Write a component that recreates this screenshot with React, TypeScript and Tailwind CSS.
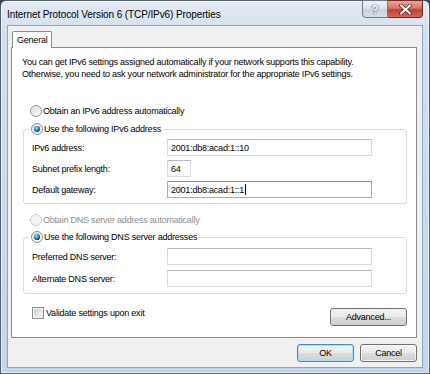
import React from 'react';

function Radio({ checked = false, disabled = false }: { checked?: boolean; disabled?: boolean }) {
  return (
    <svg width="12" height="12" viewBox="0 0 12 12" className="shrink-0">
      <defs>
        <linearGradient id="radioFill" x1="0" y1="0" x2="1" y2="1">
          <stop offset="0" stopColor="#d2d2d2" />
          <stop offset="1" stopColor="#ffffff" />
        </linearGradient>
        <radialGradient id="radioDot" cx="0.4" cy="0.35" r="0.75">
          <stop offset="0" stopColor="#a6e8fc" />
          <stop offset="0.45" stopColor="#2b8fc4" />
          <stop offset="1" stopColor="#0c3552" />
        </radialGradient>
      </defs>
      <circle cx="6" cy="6" r="5.5" fill={disabled ? '#f5f5f5' : 'url(#radioFill)'} stroke={disabled ? '#c9c9c9' : '#8e8f8f'} />
      {!disabled && <circle cx="6" cy="6" r="4.3" fill="none" stroke="#f4f4f4" strokeWidth="0.8" />}
      {checked && <circle cx="6" cy="6" r="3.1" fill="url(#radioDot)" />}
    </svg>
  );
}

function Checkbox() {
  return (
    <svg width="12" height="12" viewBox="0 0 12 12" className="shrink-0">
      <defs>
        <linearGradient id="boxFill" x1="0" y1="0" x2="1" y2="1">
          <stop offset="0" stopColor="#cfcfcf" />
          <stop offset="1" stopColor="#f7f7f7" />
        </linearGradient>
      </defs>
      <rect x="0.5" y="0.5" width="11" height="11" fill="#f4f4f4" stroke="#8e8f8f" />
      <rect x="2" y="2" width="8" height="8" fill="url(#boxFill)" />
    </svg>
  );
}

function Field({ label, value, w = 'w-[205px]', focused = false }: { label: string; value?: string; w?: string; focused?: boolean }) {
  return (
    <div className="flex items-center h-[17px]">
      <span className="w-[135px] shrink-0">{label}</span>
      <div
        className={`${w} h-[17px] flex items-center px-[3px] bg-white border ${
          focused ? 'border-[#7eb4ea] border-t-[#569de5]' : 'border-[#d6dadf] border-t-[#b5b9bf]'
        }`}
      >
        {value}
        {focused && <span className="ml-px w-px h-[11px] bg-black" />}
      </div>
    </div>
  );
}

const btn =
  'h-[18px] rounded-[3px] border flex items-center justify-center bg-[linear-gradient(180deg,#f3f3f3_0%,#ebebeb_48%,#dcdcdc_52%,#cfcfcf_100%)]';

export default function App() {
  return (
    <div className="w-[430px] h-[374px] bg-[#3a4552] font-['Liberation_Sans',Arial,sans-serif] text-[9px] leading-[12px] tracking-[-0.22px] text-black">
      <div className="w-full h-full flex flex-col border border-[#52606f] rounded-t-[6px] px-[6px] pb-[5px] bg-[linear-gradient(180deg,#e4ebf3_0px,#d3e0ee_30px,#c2d6eb_100%)] shadow-[inset_0_0_0_1px_rgba(255,255,255,0.55)]">
        {/* Title bar */}
        <div className="h-[24px] shrink-0 flex items-start justify-between">
          <span className="pt-[7px] text-[10px] leading-[13px] tracking-[-0.1px]">Internet Protocol Version 6 (TCP/IPv6) Properties</span>
          <div className="-mt-px flex">
            <div className="w-[26px] h-[18px] border border-[#6f7b89] rounded-bl-[4px] flex items-center justify-center bg-[linear-gradient(180deg,#eef3f8_0%,#dce4ec_45%,#c7d2de_55%,#d5dfea_100%)]">
              <span className="text-[13px] leading-[13px] font-bold tracking-normal text-white [text-shadow:0_0_1px_#2c3a4a,0_0_1px_#2c3a4a]">?</span>
            </div>
            <div className="w-[35px] h-[18px] border border-l-0 border-[#6b2a22] rounded-br-[4px] flex items-center justify-center bg-[linear-gradient(180deg,#e9a596_0%,#d77565_45%,#c43f30_55%,#d66756_100%)]">
              <svg width="13" height="11" viewBox="0 0 13 11">
                <path d="M2 1.5 L11 9.5 M11 1.5 L2 9.5" stroke="#4a1a14" strokeWidth="3.6" strokeLinecap="round" />
                <path d="M2 1.5 L11 9.5 M11 1.5 L2 9.5" stroke="#ffffff" strokeWidth="2.2" strokeLinecap="round" />
              </svg>
            </div>
          </div>
        </div>

        {/* Client area */}
        <div className="flex-1 flex flex-col bg-[#f0f0f0] border border-[#8fa5bc] pl-[3px] pr-[5px] pt-[5px] pb-[5px]">
          <div className="flex pl-px">
            <div className="relative z-10 -mb-px w-[40px] h-[17px] bg-white border border-b-0 border-[#898c95] rounded-t-[2px] flex items-center pl-[4px]">
              General
            </div>
          </div>

          <div className="flex-1 bg-white border border-[#898c95] flex flex-col pt-[8px]">
            <p className="pl-[10px] whitespace-nowrap">
              You can get IPv6 settings assigned automatically if your network supports this capability.
              <br />
              Otherwise, you need to ask your network administrator for the appropriate IPv6 settings.
            </p>

            <label className="mt-[25px] ml-[18px] flex items-center gap-px h-[12px]">
              <Radio />
              Obtain an IPv6 address automatically
            </label>

            <fieldset className="mt-[6px] ml-[11px] mr-[9px] border border-[#d5dbe1] rounded-[3px]">
              <legend className="ml-[5px] px-[2px]">
                <span className="flex items-center gap-px h-[12px]">
                  <Radio checked />
                  Use the following IPv6 address
                </span>
              </legend>
              <div className="pl-[8px] pt-[4px] pb-[5px] flex flex-col gap-[4px]">
                <Field label="IPv6 address:" value="2001:db8:acad:1::10" />
                <Field label="Subnet prefix length:" value="64" w="w-[24px]" />
                <Field label="Default gateway:" value="2001:db8:acad:1::1" focused />
              </div>
            </fieldset>

            <label className="mt-[10px] ml-[18px] flex items-center gap-px h-[12px] text-[#8d8d8d]">
              <Radio disabled />
              Obtain DNS server address automatically
            </label>

            <fieldset className="mt-[5px] ml-[11px] mr-[9px] border border-[#d5dbe1] rounded-[3px]">
              <legend className="ml-[5px] px-[2px]">
                <span className="flex items-center gap-px h-[12px]">
                  <Radio checked />
                  Use the following DNS server addresses
                </span>
              </legend>
              <div className="pl-[8px] pt-[5px] pb-[6px] flex flex-col gap-[5px]">
                <Field label="Preferred DNS server:" />
                <Field label="Alternate DNS server:" />
              </div>
            </fieldset>

            <div className="mt-[13px] ml-[20px] mr-[9px] flex items-start justify-between">
              <label className="flex items-center gap-[2px] h-[12px]">
                <Checkbox />
                Validate settings upon exit
              </label>
              <div className={`${btn} mt-px w-[77px] border-[#707070]`}>Advanced...</div>
            </div>
          </div>

          <div className="mt-[6px] flex justify-end gap-[6px]">
            <div className={`${btn} w-[57px] border-[#3c8fc4] shadow-[inset_0_0_0_1px_#a9e0f8]`}>OK</div>
            <div className={`${btn} w-[57px] border-[#707070] shadow-[inset_0_0_0_1px_rgba(255,255,255,0.7)]`}>Cancel</div>
          </div>
        </div>
      </div>
    </div>
  );
}
